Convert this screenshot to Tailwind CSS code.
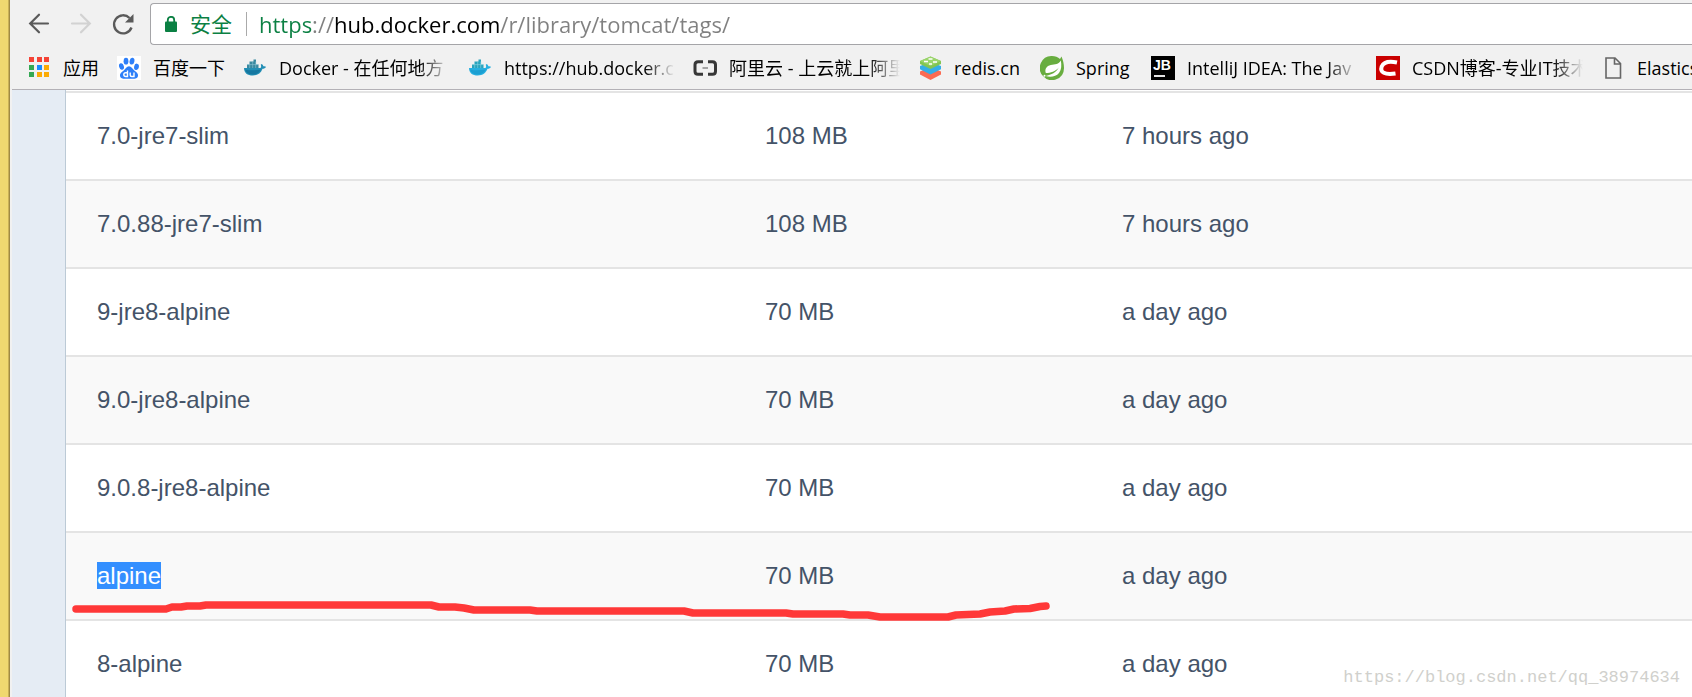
<!DOCTYPE html>
<html lang="zh-CN">

<head>
    <meta charset="UTF-8">
    <meta name="viewport" content="width=device-width, initial-scale=1.0">
    <title>library/tomcat - Docker Hub</title>
    <script src="https://cdn.jsdelivr.net/npm/@tailwindcss/browser@4"></script>
</head>

<body class="flex h-screen overflow-hidden bg-[#f1f1f1] font-['Open_Sans','Noto_Sans_CJK_SC',sans-serif]">
    <!-- Window edge -->
    <div class="w-[10px] shrink-0 border-r border-[#a08a44] bg-[#f0d870] shadow-[inset_-1px_0_#c9b058]"></div>

    <div class="ml-[2px] flex min-w-0 flex-1 flex-col">
        <!-- Toolbar -->
        <header class="border-b border-[#b3b1b6]">
            <div class="flex items-center pt-[3px] pl-[14px]">
                <button class="flex h-6 w-6 items-center justify-center" aria-label="Back">
                    <svg class="h-6 w-6" viewBox="0 0 24 24" fill="none" stroke="#5a5a5a" stroke-width="2.2" stroke-linecap="round">
                        <path d="M22 11.500H4.500M13 2.700 4.200 11.500l8.800 8.800" />
                    </svg>
                </button>
                <button class="ml-[18px] flex h-6 w-6 items-center justify-center" aria-label="Forward">
                    <svg class="h-6 w-6" viewBox="0 0 24 24" fill="none" stroke="#d2d2d2" stroke-width="2.2" stroke-linecap="round">
                        <path d="M4 11.500H21.500M13 2.700l8.800 8.800-8.800 8.800" />
                    </svg>
                </button>
                <button class="ml-[18px] flex h-6 w-6 items-center justify-center" aria-label="Reload">
                    <svg class="h-6 w-6" viewBox="0 0 24 24">
                        <path d="M21.500 15.500A9 9 0 1 1 19.500 6" fill="none" stroke="#5a5a5a" stroke-width="2.400" />
                        <path d="M23.500 2v8.500H15z" fill="#5a5a5a" />
                    </svg>
                </button>
                <div class="ml-4 flex h-[42px] min-w-0 flex-1 items-center rounded-l border border-r-0 border-[#a5a5a8] bg-white pl-[14px]">
                    <svg class="h-4 w-3 shrink-0" viewBox="0 0 12 16">
                        <path d="M2.800 7V4a3.200 3.200 0 0 1 6.400 0v3" fill="none" stroke="#0b8043" stroke-width="1.800" />
                        <rect y="5.500" width="12" height="10.500" rx="1" fill="#0b8043" />
                    </svg>
                    <label for="url" class="ml-[13px] shrink-0 text-[21px] leading-7 text-[#0b8043]">安全</label>
                    <div class="ml-[14px] h-6 w-px bg-[#aaaaaa]"></div>
                    <input id="url" type="text" value="https://hub.docker.com/r/library/tomcat/tags/"
                        class="ml-3 h-9 min-w-0 flex-1 bg-[linear-gradient(to_right,#0b8043_53px,#808080_53px,#808080_75px,#000_75px,#000_240px,#808080_240px)] bg-clip-text text-[22px] text-transparent outline-none">
                </div>
            </div>

            <!-- Bookmarks -->
            <nav class="flex h-[44px] items-center gap-[18px] overflow-hidden pt-[2px] pl-[15px] text-[18px] leading-6 whitespace-nowrap text-black">
                <a href="#" class="flex shrink-0 items-center gap-3">
                    <svg class="h-6 w-6" viewBox="0 0 24 24">
                        <path d="M2 1h5v5H2zM10 1h5v5h-5zM17 1h5v5h-5z" fill="#f44336" />
                        <path d="M2 9h5v5H2zM2 16h5v5H2z" fill="#34a853" />
                        <path d="M10 9h5v5h-5z" fill="#1a8cff" />
                        <path d="M17 9h5v5h-5zM10 16h5v5h-5zM17 16h5v5h-5z" fill="#fbab05" />
                    </svg>
                    <span>应用</span>
                </a>
                <a href="#" class="flex shrink-0 items-center gap-3">
                    <svg class="h-6 w-6 bg-white" viewBox="0 0 24 24">
                        <g fill="#2d7ff9">
                            <ellipse cx="4.500" cy="10.500" rx="2.400" ry="3.300" transform="rotate(-15 4.500 10.500)" />
                            <ellipse cx="9" cy="5.200" rx="2.400" ry="3.400" />
                            <ellipse cx="15" cy="5.200" rx="2.400" ry="3.400" transform="rotate(12 15 5.200)" />
                            <ellipse cx="19.500" cy="10.800" rx="2.400" ry="3.200" transform="rotate(10 19.500 10.800)" />
                            <path d="M12 10.200c-2.500 0-3.200 2.300-5.300 4.200C4.500 16.300 2.500 17.500 3 20c.6 3.200 4 3 9 2.700 5 .3 8.400.5 9-2.700.5-2.500-1.500-3.700-3.700-5.600-2.100-1.900-2.800-4.200-5.300-4.200z" />
                        </g>
                        <path d="M10.500 14.500v6H8.700a1.900 1.900 0 0 1 0-3.800h1.800M13.200 16.500v2.500q0 1.500 1.500 1.500h2.300v-4" fill="none" stroke="#fff" stroke-width="1.400" />
                    </svg>
                    <span>百度一下</span>
                </a>
                <a href="#" class="flex shrink-0 items-center gap-3">
                    <svg class="h-6 w-6" viewBox="0 0 24 24">
                        <path d="M1 12h16.500c.8-.8.800-2 .2-3.200l1-.8c1 .6 1.500 1.400 1.700 2.300 1-.2 2 0 2.600.500-.6 1.500-1.900 2-3.500 2-1.600 4.300-4.700 6.700-9.700 6.700C4.500 19.500 1 17 1 12z" fill="#238fb5" />
                        <path d="M2 13.500c5 1.200 10 1 16 0-2 3.500-4.500 5-8.500 5-4 0-6.500-1.500-7.500-5z" fill="#1577a0" />
                        <path d="M4 8.500h11.500V12H4zM6.500 5.500h6.500v3H6.500zM10.500 3.500H13v2.500h-2.500z" fill="#39899f" />
                        <path d="M6.700 8.500v3.500M9.700 5.500V12M12.700 5.500V12M4 8.600h11.500" stroke="#8bc3d3" stroke-width=".6" />
                    </svg>
                    <span class="w-[171px] overflow-hidden [mask-image:linear-gradient(to_right,black_82%,transparent)]">Docker - 在任何地方</span>
                </a>
                <a href="#" class="flex shrink-0 items-center gap-3">
                    <svg class="h-6 w-6" viewBox="0 0 24 24">
                        <path d="M1 12h16.500c.8-.8.800-2 .2-3.200l1-.8c1 .6 1.500 1.400 1.700 2.300 1-.2 2 0 2.600.500-.6 1.500-1.900 2-3.500 2-1.600 4.300-4.700 6.700-9.700 6.700C4.500 19.500 1 17 1 12z" fill="#28b0e0" />
                        <path d="M2 13.500c5 1.200 10 1 16 0-2 3.500-4.500 5-8.500 5-4 0-6.500-1.500-7.500-5z" fill="#1b9fd2" />
                        <path d="M4 8.500h11.500V12H4zM6.500 5.500h6.500v3H6.500zM10.500 3.500H13v2.500h-2.500z" fill="#2aa4bd" />
                        <path d="M6.700 8.500v3.500M9.700 5.500V12M12.700 5.500V12M4 8.600h11.500" stroke="#8bd3e3" stroke-width=".6" />
                    </svg>
                    <span class="w-[171px] overflow-hidden [mask-image:linear-gradient(to_right,black_82%,transparent)]">https://hub.docker.c</span>
                </a>
                <a href="#" class="flex shrink-0 items-center gap-3">
                    <svg class="h-6 w-6" viewBox="0 0 24 24" fill="none" stroke="#373737">
                        <path d="M10 5.700H5Q2 5.700 2 8.700v6.600q0 3 3 3h5M15 5.700h4.500q3 0 3 3v6.600q0 3-3 3H15" stroke-width="3" />
                        <path d="M9.500 12h5.500" stroke="#888" stroke-width="1.500" />
                    </svg>
                    <span class="w-[171px] overflow-hidden [mask-image:linear-gradient(to_right,black_82%,transparent)]">阿里云 - 上云就上阿里</span>
                </a>
                <a href="#" class="flex shrink-0 items-center gap-3">
                    <svg class="h-6 w-6" viewBox="0 0 24 24">
                        <path d="m12.500 11 10.500 4.500v3L12.500 24 2 18.500v-3z" fill="#fb6b52" />
                        <path d="m12.500 6 10.500 4v3.200L12.500 18.500 2 13.200V10z" fill="#35aee6" />
                        <path d="M12.500.500 23 5v3L12.500 13 2 8V5z" fill="#83c553" />
                        <path d="M12.500.500 23 5l-10.500 5L2 5z" fill="#9bd56c" />
                        <path d="M6 5.500h4M10.500 3h4M15 6h4M11 8h3" stroke="#fff" stroke-width="1.500" />
                    </svg>
                    <span class="min-w-[68px]">redis.cn</span>
                </a>
                <a href="#" class="flex shrink-0 items-center gap-3">
                    <svg class="h-6 w-6" viewBox="0 0 24 24">
                        <path d="M21.500.500c1.500 3.500 2.500 7.500 2.500 11.500a12 12 0 0 1-21 8A11.900 11.900 0 0 1 12 0c3 0 6 1 8 3z" fill="#68ad3f" />
                        <path d="M20.800 4.500c-2 4-5.800 3.700-10 4.500C6.500 10 4.500 13 5.800 17c5-.2 9.500-1.300 13-5.500-2.600 5-7.200 7.300-13.300 8.500 5 1.800 10.500.6 13.500-3 2.600-3.500 2.700-8 1.800-12.500z" fill="#fff" />
                        <circle cx="4.500" cy="19.800" r="1" fill="#fff" />
                    </svg>
                    <span class="min-w-[57px]">Spring</span>
                </a>
                <a href="#" class="flex shrink-0 items-center gap-3">
                    <svg class="h-6 w-6 bg-black" viewBox="0 0 24 24">
                        <text x="2" y="13.500" fill="#fff" font-family="Liberation Sans" font-weight="700" font-size="14">JB</text>
                        <path d="M3 20h11" stroke="#fff" stroke-width="1.800" />
                    </svg>
                    <span class="w-[171px] overflow-hidden [mask-image:linear-gradient(to_right,black_82%,transparent)]">IntelliJ IDEA: The Jav</span>
                </a>
                <a href="#" class="flex shrink-0 items-center gap-3">
                    <svg class="h-6 w-6 bg-[#ca0000]" viewBox="0 0 24 24">
                        <path d="M21 6.500C15 5.200 8 5.500 5.700 10.500c-2 6 3 8.500 13.800 7" fill="none" stroke="#fff" stroke-width="4" />
                    </svg>
                    <span class="w-[171px] overflow-hidden [mask-image:linear-gradient(to_right,black_82%,transparent)]">CSDN博客-专业IT技术</span>
                </a>
                <a href="#" class="flex shrink-0 items-center gap-3">
                    <svg class="h-6 w-6" viewBox="0 0 24 24" fill="none" stroke="#666" stroke-width="1.600">
                        <path d="M5 2h9l5.500 5.500V22H5zM13.500 2v6h6" />
                    </svg>
                    <span>Elasticsearch</span>
                </a>
            </nav>
        </header>

        <!-- Tag list -->
        <main class="relative flex min-h-0 flex-1 bg-[#e5ecf4] pl-[53px]">
            <div class="flex-1 border-l border-[#bccad6] bg-white pt-px">
                <table class="w-full table-fixed border-separate border-spacing-0 text-left font-['Liberation_Sans',sans-serif] text-[24px] leading-7 text-[#445368]">
                    <colgroup>
                        <col class="w-[668px]">
                        <col class="w-[357px]">
                        <col>
                    </colgroup>
                    <tbody class="[&_td]:h-[88px] [&_td]:border-t-2 [&_td]:border-[#e4e4e4] [&_td]:pl-[31px]">
                        <tr>
                            <td>7.0-jre7-slim</td>
                            <td>108 MB</td>
                            <td>7 hours ago</td>
                        </tr>
                        <tr class="bg-[#f9f9f9]">
                            <td>7.0.88-jre7-slim</td>
                            <td>108 MB</td>
                            <td>7 hours ago</td>
                        </tr>
                        <tr>
                            <td>9-jre8-alpine</td>
                            <td>70 MB</td>
                            <td>a day ago</td>
                        </tr>
                        <tr class="bg-[#f9f9f9]">
                            <td>9.0-jre8-alpine</td>
                            <td>70 MB</td>
                            <td>a day ago</td>
                        </tr>
                        <tr>
                            <td>9.0.8-jre8-alpine</td>
                            <td>70 MB</td>
                            <td>a day ago</td>
                        </tr>
                        <tr class="bg-[#f9f9f9]">
                            <td><span class="bg-[#338fff] text-white">alpine</span></td>
                            <td>70 MB</td>
                            <td>a day ago</td>
                        </tr>
                        <tr>
                            <td>8-alpine</td>
                            <td>70 MB</td>
                            <td>a day ago</td>
                        </tr>
                    </tbody>
                </table>
            </div>

            <!-- Hand-drawn underline -->
            <svg class="pointer-events-none absolute top-[510px] left-[58px] h-[24px] w-[984px]" viewBox="70 600 984 24" fill="none" stroke="#ff3838" stroke-width="7.500" stroke-linecap="round" stroke-linejoin="round">
                <path d="M76 609H166L172 607H181L187 606H200L206 605H431L439 607H455L464 608L474 610H530L537 611H684L693 613H786L793 614H843L850 615H868L880 617H948L956 615L980 614L990 612L1005 611L1014 609L1030 608.500L1040 606.500L1046 606" />
            </svg>

            <p class="absolute right-[12px] bottom-[7px] font-['Liberation_Mono',monospace] text-[17px] leading-6 text-[#d0d0cc]">https://blog.csdn.net/qq_38974634</p>
        </main>
    </div>
</body>

</html>
